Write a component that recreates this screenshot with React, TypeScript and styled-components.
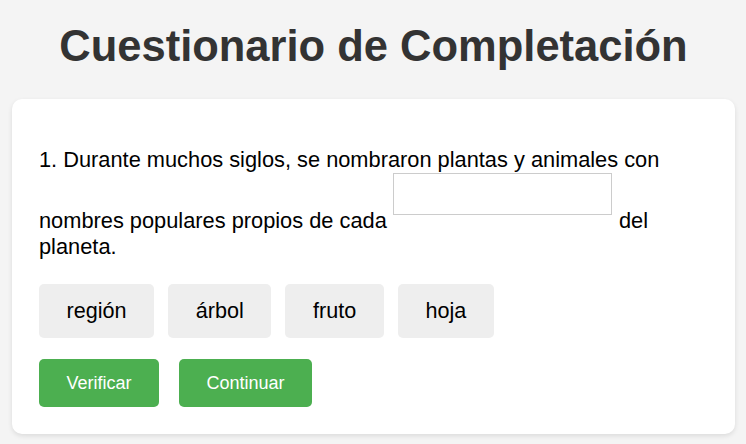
import React from 'react';
import styled, { createGlobalStyle } from 'styled-components';

const GlobalStyle = createGlobalStyle`
  html, body {
    margin: 0;
    padding: 0;
    background-color: #f4f4f4;
    font-family: 'Liberation Sans', Arial, sans-serif;
  }
`;

const Page = styled.div`
  padding: 21px 11px 12px 12px;
`;

const Title = styled.h1`
  margin: 0 0 28px;
  text-align: center;
  font-size: 43.5px;
  line-height: 50px;
  font-weight: bold;
  color: #333;
`;

const Card = styled.div`
  background-color: #fff;
  border-radius: 10px;
  padding: 27px;
  box-shadow: 0 2px 5px rgba(0, 0, 0, 0.1);
`;

const Question = styled.p`
  margin: 21px 0 24px;
  font-size: 21.8px;
  line-height: 26px;
  color: #000;
`;

const Blank = styled.span`
  display: inline-block;
  box-sizing: border-box;
  width: 219px;
  height: 42px;
  margin: 0 1px 13px 0;
  border: 1px solid #ccc;
  background-color: #fff;
`;

const Options = styled.div`
  display: flex;
  flex-wrap: wrap;
  gap: 14px;
  margin-bottom: 21px;
`;

const Option = styled.div`
  padding: 15px 27.6px;
  font-size: 21.6px;
  line-height: 24px;
  background-color: #eee;
  border-radius: 5px;
  color: #000;
  cursor: pointer;
`;

const Actions = styled.div`
  display: flex;
  gap: 20px;
`;

const ActionButton = styled.button`
  padding: 14px 27.5px;
  font-family: inherit;
  font-size: 18px;
  line-height: 20px;
  color: #fff;
  background-color: #4caf50;
  border: none;
  border-radius: 5px;
  cursor: pointer;
`;

const words = ['región', 'árbol', 'fruto', 'hoja'];

export default function App() {
  return (
    <>
      <GlobalStyle />
      <Page>
        <Title>Cuestionario de Completación</Title>
        <Card>
          <Question>
            1. Durante muchos siglos, se nombraron plantas y animales con nombres populares propios de cada{' '}
            <Blank /> del planeta.
          </Question>
          <Options>
            {words.map((w) => (
              <Option key={w}>{w}</Option>
            ))}
          </Options>
          <Actions>
            <ActionButton>Verificar</ActionButton>
            <ActionButton>Continuar</ActionButton>
          </Actions>
        </Card>
      </Page>
    </>
  );
}
